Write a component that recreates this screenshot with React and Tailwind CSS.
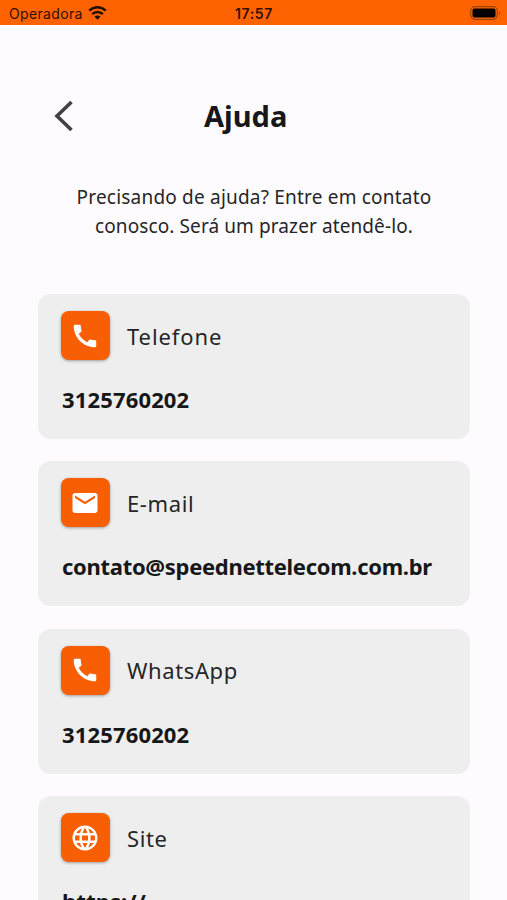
const icons = {
  phone:
    "M20.010 15.380c-1.230 0-2.420-.2-3.530-.56-.35-.12-.74-.03-1.010.24l-1.570 1.970c-2.830-1.350-5.480-3.900-6.890-6.830l1.950-1.660c.27-.28.35-.67.24-1.020-.37-1.110-.56-2.300-.56-3.530 0-.54-.45-.99-.99-.99H4.190C3.650 3 3 3.240 3 3.990 3 13.280 10.730 21 20.010 21c.71 0 .99-.63.99-1.180v-3.450c0-.54-.45-.99-.99-.99z",
  mail: "M20 4H4c-1.100 0-1.990.9-1.990 2L2 18c0 1.100.9 2 2 2h16c1.100 0 2-.9 2-2V6c0-1.100-.9-2-2-2zm0 4l-8 5-8-5V6l8 5 8-5v2z",
  globe:
    "M11.990 2C6.470 2 2 6.480 2 12s4.470 10 9.990 10C17.520 22 22 17.520 22 12S17.520 2 11.990 2zm6.930 6h-2.950c-.32-1.250-.78-2.450-1.380-3.560 1.840.63 3.370 1.910 4.330 3.560zM12 4.040c.83 1.200 1.480 2.530 1.910 3.960h-3.820c.43-1.430 1.080-2.760 1.910-3.960zM4.260 14C4.100 13.360 4 12.690 4 12s.1-1.360.26-2h3.380c-.08.66-.14 1.320-.14 2s.06 1.340.14 2H4.260zm.82 2h2.950c.32 1.250.78 2.450 1.380 3.560-1.840-.63-3.370-1.900-4.330-3.560zm2.950-8H5.080c.96-1.660 2.490-2.930 4.330-3.560C8.810 5.550 8.350 6.750 8.030 8zM12 19.960c-.83-1.200-1.480-2.530-1.910-3.960h3.820c-.43 1.430-1.080 2.760-1.910 3.960zM14.340 14H9.660c-.09-.66-.16-1.320-.16-2s.07-1.350.16-2h4.680c.09.65.16 1.320.16 2s-.07 1.340-.16 2zm.25 5.560c.6-1.110 1.060-2.310 1.380-3.560h2.950c-.96 1.650-2.490 2.930-4.330 3.560zM16.360 14c.08-.66.14-1.320.14-2s-.06-1.340-.14-2h3.380c.16.64.26 1.310.26 2s-.1 1.360-.26 2h-3.380z",
};

const contacts = [
  { icon: "phone", label: "Telefone", value: "3125760202", labelClass: "tracking-[0.9px]", valueClass: "tracking-[0.15px]" },
  { icon: "mail", label: "E-mail", value: "contato@speednettelecom.com.br", labelClass: "tracking-[0.6px]", valueClass: "tracking-[-0.3px]" },
  { icon: "phone", label: "WhatsApp", value: "3125760202", labelClass: "tracking-[0.6px]", valueClass: "tracking-[0.15px]" },
  { icon: "globe", label: "Site", value: "https://", labelClass: "tracking-[0.6px]", valueClass: "tracking-[0.15px]" },
];

function StatusBar() {
  return (
    <header className="grid h-[25px] shrink-0 grid-cols-3 items-center bg-[#ff6200] pl-[9px] pr-[6px] font-['Inter',sans-serif] text-[#301000]">
      <div className="flex items-center gap-[5px] pt-[2px]">
        <span className="text-[14px] leading-[20px] tracking-[0.35px]">Operadora</span>
        <svg className="-mt-px h-[14px] w-[19px]" viewBox="0 0 19 14" fill="none" stroke="#241000" strokeWidth="2.600">
          <path d="M1.200 4.700a11.700 11.700 0 0 1 16.600 0M4.200 8.200a7.500 7.500 0 0 1 10.600 0" />
          <path d="M9.500 13.700 6.500 10.700a4.200 4.200 0 0 1 6 0z" fill="#241000" stroke="none" />
        </svg>
      </div>
      <span className="pr-[2px] pt-[2px] text-center text-[14px] font-semibold leading-[20px] tracking-[0.6px]">17:57</span>
      <svg className="h-[14px] w-[31px] justify-self-end" viewBox="0 0 31 14">
        <rect x="0.700" y="0.700" width="26.600" height="12.600" rx="4" fill="none" stroke="#9b4508" strokeWidth="1.200" />
        <rect x="2.500" y="2.500" width="23" height="9" rx="2" fill="#000" />
        <path d="M29 4.700q2 2.300 0 4.600z" fill="#9b4508" />
      </svg>
    </header>
  );
}

function ContactCard({ icon, label, value, labelClass, valueClass }) {
  return (
    <article className="h-[145px] shrink-0 rounded-[13px] bg-[#eeeeee] pl-[23px] pt-[17px]">
      <div className="flex items-center gap-[17px]">
        <div className="flex size-[49px] items-center justify-center rounded-[8px] bg-[#f85f04] pr-px shadow-[0_1px_3px_rgba(0,0,0,0.35)]">
          <svg className="size-[30px]" viewBox="0 0 24 24" fill="#fff">
            <path d={icons[icon]} />
          </svg>
        </div>
        <h2 className={`whitespace-nowrap text-[22px] leading-[30px] ${labelClass}`}>{label}</h2>
      </div>
      <p className={`mt-[24px] whitespace-nowrap pl-px text-[22px] font-bold leading-[30px] text-[#161718] ${valueClass}`}>{value}</p>
    </article>
  );
}

export default function App() {
  return (
    <div className="flex h-[900px] w-[507px] flex-col overflow-hidden bg-[#fefbff] font-['Noto_Sans',sans-serif] text-[#252627]">
      <StatusBar />
      <div className="mt-[71px] flex h-[40px] shrink-0 items-center pl-[54px]">
        <svg className="h-[32px] w-[20px]" viewBox="0 0 20 32" fill="none" stroke="#414042" strokeWidth="3.600">
          <path d="M17.500 2 3 16 17.500 30" />
        </svg>
        <h1 className="ml-[130px] text-[29px] font-bold leading-[40px] text-[#161718]">Ajuda</h1>
      </div>
      <p className="mt-[47px] flex shrink-0 flex-col items-center whitespace-nowrap pl-px text-[19px] leading-[29px]">
        <span className="tracking-[0.2px]">Precisando de ajuda? Entre em contato</span>
        <span className="tracking-[0.1px]">conosco. Será um prazer atendê-lo.</span>
      </p>
      <main className="mt-[53px] flex flex-col gap-[22.4px] pl-[38px] pr-[37px]">
        {contacts.map((c) => (
          <ContactCard key={c.label} {...c} />
        ))}
      </main>
    </div>
  );
}
